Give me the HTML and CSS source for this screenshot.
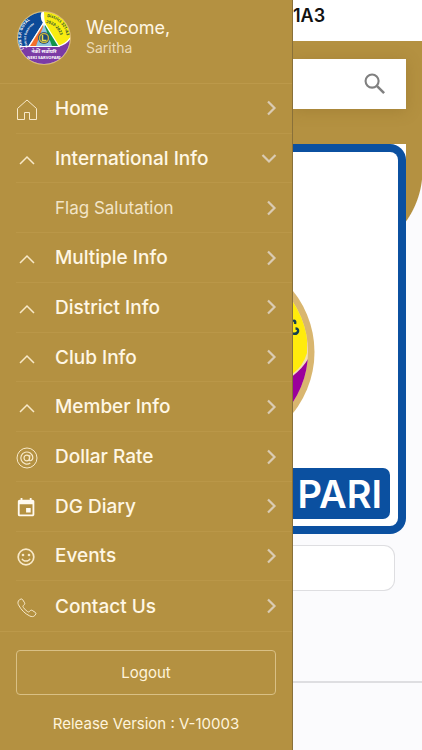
FILE: index.html
```html
<!DOCTYPE html>
<html lang="en">
<head>
<meta charset="utf-8">
<meta name="viewport" content="width=device-width, initial-scale=1">
<title>Menu</title>
<link rel="stylesheet" href="styles.css">
</head>
<body>
<svg class="symbols" aria-hidden="true">
  <symbol id="next" viewBox="0 0 16 16"><path d="M4 1.500 10.500 8 4 14.500" fill="none" stroke="currentColor" stroke-width="2.200"/></symbol>
  <symbol id="caret" viewBox="0 0 22 22"><path d="M4 15 11 8l7 7" fill="none" stroke="currentColor" stroke-width="1.500"/></symbol>
</svg>
<div class="app">
  <aside class="drawer">
    <header class="profile">
      <svg class="emblem" viewBox="0 0 54 54" role="img" aria-label="District emblem">
        <defs>
          <clipPath id="disc"><circle cx="27" cy="27" r="26"/></clipPath>
          <path id="arc-name" d="M7 38A22 22 0 0 1 24 5"/>
          <path id="arc-role" d="M11 36A17 17 0 0 1 25 11"/>
          <path id="arc-district" d="M30 6A21 21 0 0 1 49 32"/>
          <path id="arc-year" d="M29 12A16 16 0 0 1 43 32"/>
        </defs>
        <circle cx="27" cy="27" r="27" fill="#d9b878"/>
        <g clip-path="url(#disc)">
          <path fill="#f8ed10" d="M0 0h54v54H0z"/>
          <path fill="#fff" d="M27 0Q27 7 28 12L12 37 0 40V0z"/>
          <path fill="#0c4a98" d="M25 0Q22 6 26 12L10 37 0 39V0z"/>
          <path fill="#fff" d="M0 35h40Q49 33 54 25v29H0z"/>
          <path fill="#7b3ba5" d="M0 36h41Q50 34 54 27v27H0z"/>
          <path fill="#fff" d="M27 10 43 36H11z"/>
          <path fill="#f26f2c" d="M26 14v10l-6 11h-7z"/>
          <path fill="#12934a" d="M28 14v10l6 11h7z"/>
          <path fill="#8fc4df" d="M27 13 35 35H19z"/>
          <circle cx="27" cy="27" r="6" fill="#204a78"/>
          <circle cx="27" cy="27" r="4.500" fill="#204a78" stroke="#c5b33c" stroke-width="1.500"/>
          <path d="M25.500 24v5.500h4" fill="none" stroke="#eadf4d" stroke-width="1.500"/>
        </g>
        <g class="emblem-text">
          <text fill="#fff" font-size="4"><textPath href="#arc-name">LION S.P. GOYAL</textPath></text>
          <text fill="#fff" font-size="3"><textPath href="#arc-role">District Governor</textPath></text>
          <text fill="#254c35" font-size="4"><textPath href="#arc-district">District 321-A3</textPath></text>
          <text fill="#254c35" font-size="4"><textPath href="#arc-year">2022-2023</textPath></text>
          <text x="27" y="42" fill="#fff" font-size="5" text-anchor="middle">नेकी सर्वोपरि</text>
          <text x="27" y="48" fill="#fff" font-size="4" text-anchor="middle">NEKI SARVOPARI</text>
        </g>
      </svg>
      <div class="greeting">
        <p class="welcome">Welcome,</p>
        <p class="user">Saritha</p>
      </div>
    </header>
    <nav class="menu" aria-label="Main">
      <a class="item" href="#home">
        <svg class="icon" viewBox="0 0 22 22"><path d="M1.500 9.500 11 1l9.500 8.500V20.500h-7v-7h-5v7h-7z" fill="none" stroke="currentColor"/></svg>
        <span class="label">Home</span><svg class="arrow"><use href="#next"/></svg></a>
      <button class="item" type="button" aria-expanded="true">
        <svg class="icon"><use href="#caret"/></svg>
        <span class="label">International Info</span><svg class="arrow arrow-open" viewBox="0 0 16 16"><path d="M1.500 5 8 11.500 14.500 5" fill="none" stroke="currentColor" stroke-width="2.200"/></svg></button>
      <a class="item sub" href="#flag">
        <span class="icon"></span>
        <span class="label">Flag Salutation</span><svg class="arrow"><use href="#next"/></svg></a>
      <button class="item" type="button" aria-expanded="false">
        <svg class="icon"><use href="#caret"/></svg>
        <span class="label">Multiple Info</span><svg class="arrow"><use href="#next"/></svg></button>
      <button class="item" type="button" aria-expanded="false">
        <svg class="icon"><use href="#caret"/></svg>
        <span class="label">District Info</span><svg class="arrow"><use href="#next"/></svg></button>
      <button class="item" type="button" aria-expanded="false">
        <svg class="icon"><use href="#caret"/></svg>
        <span class="label">Club Info</span><svg class="arrow"><use href="#next"/></svg></button>
      <button class="item" type="button" aria-expanded="false">
        <svg class="icon"><use href="#caret"/></svg>
        <span class="label">Member Info</span><svg class="arrow"><use href="#next"/></svg></button>
      <a class="item" href="#rate">
        <svg class="icon" viewBox="0 0 22 22" fill="none" stroke="currentColor"><circle cx="11" cy="11" r="10"/><circle cx="10.800" cy="11" r="2.800" stroke-width="1.200"/><path stroke-width="1.200" d="M13.900 8.200 13.300 12.500Q13.300 14 14.600 13.700C16 13.300 16.800 11.900 16.800 10.400A6 6 0 1 0 14.300 15.900"/></svg>
        <span class="label">Dollar Rate</span><svg class="arrow"><use href="#next"/></svg></a>
      <a class="item" href="#diary">
        <svg class="icon solid" viewBox="1 0 24 24"><path fill="currentColor" d="M17 12h-5v5h5v-5zM16 1v2H8V1H6v2H5c-1.110 0-1.990.9-1.990 2L3 19a2 2 0 0 0 2 2h14c1.100 0 2-.9 2-2V5c0-1.100-.9-2-2-2h-1V1h-2zm3 18H5V8h14v11z"/></svg>
        <span class="label">DG Diary</span><svg class="arrow"><use href="#next"/></svg></a>
      <a class="item" href="#events">
        <svg class="icon" viewBox="0 0 22 22"><circle cx="10" cy="11" r="7.800" fill="none" stroke="currentColor" stroke-width="1.700"/><circle cx="7" cy="9" r="1.300" fill="currentColor"/><circle cx="13" cy="9" r="1.300" fill="currentColor"/><path d="M6 12.700c1.500 3.200 6.500 3.200 8 0" fill="none" stroke="currentColor" stroke-width="1.500"/></svg>
        <span class="label">Events</span><svg class="arrow"><use href="#next"/></svg></a>
      <a class="item" href="#contact">
        <svg class="icon" viewBox="0 0 22 22"><path d="M3.400 2.800 5 2q1-.3 1.600.6l2 3.200q.5 1-.3 1.800l-1 1c-.6.7-.3 1.300.1 1.900 1.100 1.700 2.500 3 4.200 4.100.8.500 1.300.5 1.900-.1l.9-1q.8-.7 1.800-.1l3.100 2q1 .7.500 1.600l-1 1.500c-1.300 1.500-3.300 1.300-5 .5C8.800 16.600 4.900 12.600 2.400 7.700c-.8-1.700-.6-3.700 1-4.900z" fill="none" stroke="currentColor"/></svg>
        <span class="label">Contact Us</span><svg class="arrow"><use href="#next"/></svg></a>
    </nav>
    <footer class="account">
      <button class="logout" type="button">Logout</button>
      <p class="version">Release Version : V-10003</p>
    </footer>
  </aside>
  <main class="page">
    <header class="title-bar"><h1 class="title">1A3</h1></header>
    <div class="content">
      <form class="search">
        <input class="search-input" type="search" aria-label="Search">
        <button class="search-button" type="button" aria-label="Search">
          <svg class="search-icon" viewBox="0 0 24 24"><circle cx="9.500" cy="9.500" r="5.600" fill="none" stroke="currentColor" stroke-width="1.800"/><path d="m13.800 13.800 6 6" stroke="currentColor" stroke-width="2.200"/></svg>
        </button>
      </form>
      <div class="poster-mat">
        <section class="poster">
          <svg class="poster-emblem" viewBox="0 0 22 194" aria-hidden="true">
            <defs><clipPath id="seal"><circle cx="-76" cy="97" r="91"/></clipPath></defs>
            <circle cx="-76" cy="97" r="97.500" fill="#d9b66f"/>
            <g clip-path="url(#seal)">
              <path fill="#f3dfb3" d="M-20 0h42v194h-42z"/>
              <path fill="#ffeb0c" d="M-20 0h34v98Q10 112-2 120h-18z"/>
              <path fill="#9b009b" d="M-20 133Q6 120 15 104v90h-35z"/>
            </g>
            <path d="M0 66q3-1 2 3M0 78.500q4 1 5-2 .5-3-2.500-3" fill="none" stroke="#123f50" stroke-width="2.400"/>
          </svg>
          <p class="banner">PARI</p>
        </section>
      </div>
      <input class="field" type="text" aria-label="Details">
    </div>
    <div class="bottom-bar"></div>
  </main>
</div>
</body>
</html>
```
FILE: styles.css
```css
* { box-sizing: border-box; }

body, h1, p { margin: 0; }

body {
  font-family: Inter, "Liberation Sans", sans-serif;
  background: #fbfbfd;
}

button, input { font: inherit; }

.symbols { display: none; }

.app {
  display: flex;
  min-height: 100vh;
}

.drawer {
  flex: 0 0 293px;
  display: flex;
  flex-direction: column;
  background: #b49141;
  border-right: 1px solid #897039;
  color: #fff7e5;
}

.profile {
  display: flex;
  gap: 15px;
  padding: 11px 17px 18px;
  border-bottom: 1px solid #bc994a;
}

.emblem {
  width: 54px;
  height: 54px;
}

.emblem-text {
  font-family: "Noto Sans", "Open Sans", sans-serif;
  font-weight: 700;
}

.greeting { padding-top: 5px; }

.welcome {
  font-size: 18px;
  line-height: 24px;
}

.user {
  font-size: 14px;
  line-height: 16px;
  color: #ead9b5;
}

.menu {
  flex: 1;
  display: flex;
  flex-direction: column;
  border-bottom: 1px solid #bc994a;
}

.item {
  flex: 1 0 48px;
  display: flex;
  align-items: center;
  gap: 17px;
  margin-left: 16px;
  padding: 0 12px 0 0;
  border: 0;
  border-bottom: 1px solid #ba9748;
  background: none;
  color: inherit;
  text-align: left;
  text-decoration: none;
  font-size: 19px;
  font-weight: 500;
}

.item:last-child { border-bottom: 0; }

.icon {
  flex: none;
  width: 22px;
  height: 22px;
  margin-top: 3px;
  color: #f8e9c9;
}

.solid { color: #fffaf0; }

.label { flex: 1; }

.sub .label {
  font-size: 17px;
  font-weight: 400;
  color: #f2e4c7;
}

.arrow {
  width: 16px;
  height: 16px;
  color: #dacbb3;
}

.arrow-open { margin-right: 3px; }

.account {
  padding: 18px 16px 15px;
  text-align: center;
}

.logout {
  display: block;
  width: 100%;
  height: 45px;
  border: 1px solid #d9c085;
  border-radius: 4px;
  background: none;
  color: #fff4dc;
  font-size: 15px;
}

.version {
  margin-top: 18px;
  font-size: 15px;
  line-height: 22px;
  color: #fff4dc;
}

.page {
  flex: 1;
  min-width: 0;
  display: flex;
  flex-direction: column;
}

.title-bar {
  height: 41px;
  padding-top: 4px;
  background: #fff;
}

.title {
  font-size: 18px;
  line-height: 24px;
  font-weight: 600;
  color: #111;
}

.content {
  flex: 1;
  padding: 18px 16px 0 0;
  background: radial-gradient(circle at 0 0, #b49141 88px, transparent 89px) right 129px / 88px 88px no-repeat, linear-gradient(#b49141, #b49141) 0 0 / 100% 129px no-repeat, #fbfbfd;
}

.search {
  display: flex;
  height: 50px;
  background: #fff;
  box-shadow: 0 2px 14px #80602050;
  clip-path: inset(-20px -20px -20px 0);
}

.search-input {
  flex: 1;
  min-width: 0;
  border: 0;
  background: none;
}

.search-button {
  padding: 0 17px 0 0;
  border: 0;
  background: none;
  color: #808080;
}

.search-icon {
  display: block;
  width: 28px;
  height: 28px;
}

.poster-mat {
  margin-top: 35px;
  background: linear-gradient(#fff 50%, #fbfbfd 50%);
}

.poster {
  display: flex;
  flex-direction: column;
  justify-content: space-between;
  height: 390px;
  padding: 103px 8px 7px 0;
  border: 8px solid #0b50a0;
  border-left: 0;
  border-radius: 0 16px 16px 0;
  background: #fff;
}

.poster-emblem {
  width: 22px;
  height: 194px;
}

.banner {
  display: flex;
  justify-content: flex-end;
  align-items: center;
  height: 51px;
  padding-right: 8px;
  border-radius: 0 7px 7px 0;
  background: #0b50a0;
  color: #fff;
  font-size: 38px;
  font-weight: 600;
}

.field {
  display: block;
  width: calc(100% - 11px);
  height: 46px;
  margin-top: 11px;
  border: 1px solid #dedee1;
  border-left: 0;
  border-radius: 0 11px 11px 0;
  background: #fff;
}

.bottom-bar {
  height: 69px;
  border-top: 2px solid #dedee1;
}
```
